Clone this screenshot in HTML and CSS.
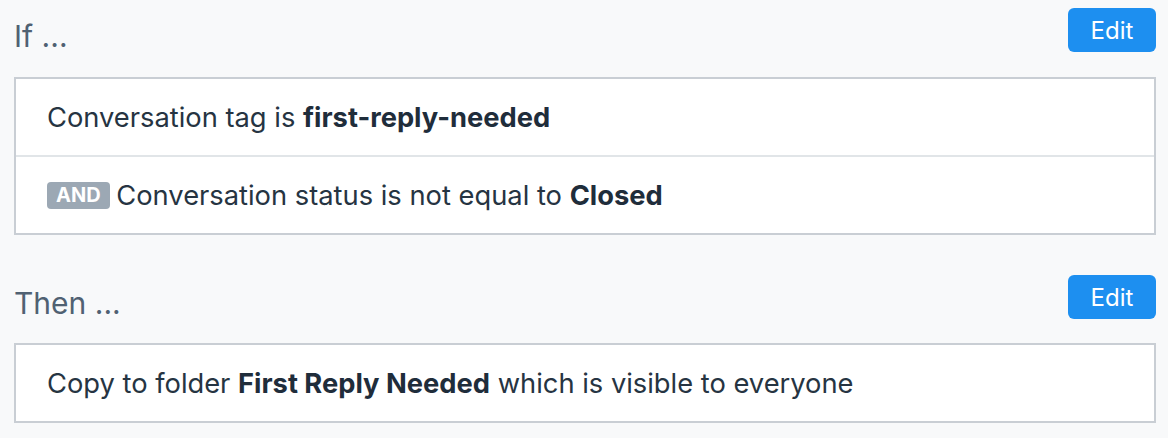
FILE: index.html
```html
<!DOCTYPE html>
<html lang="en">
<head>
    <meta charset="UTF-8">
    <meta name="viewport" content="width=device-width, initial-scale=1.0">
    <title>Workflow Rule</title>
    <link rel="stylesheet" href="styles.css">
</head>
<body>

    <div class="rule">
        <div class="section-head">
            <h2 class="section-title">If ...</h2>
            <button class="edit-btn">Edit</button>
        </div>
        <div class="panel">
            <div class="panel-row">Conversation tag is <strong>first-reply-needed</strong></div>
            <div class="panel-row"><span class="badge">AND</span> Conversation status is not equal to <strong>Closed</strong></div>
        </div>

        <div class="section-head section-head-then">
            <h2 class="section-title">Then ...</h2>
            <button class="edit-btn">Edit</button>
        </div>
        <div class="panel">
            <div class="panel-row">Copy to folder <strong>First Reply Needed</strong> which is visible to everyone</div>
        </div>
    </div>

</body>
</html>
```

FILE: styles.css
```css
body {
    font-family: Inter, "Noto Sans", sans-serif;
    background: #f8f9fa;
    color: #263442;
    margin: 0;
}

.rule {
    padding: 8px 12px 0 14px;
}

.section-head {
    display: flex;
    justify-content: space-between;
    align-items: center;
    height: 44px;
    margin-bottom: 25px;
}

.section-head-then {
    margin-top: 40px;
    margin-bottom: 24px;
}

.section-title {
    margin: 0;
    font-size: 30px;
    font-weight: 400;
    color: #506172;
    padding-top: 12px;
}

.edit-btn {
    width: 88px;
    height: 44px;
    border: none;
    border-radius: 6px;
    background: #1d8ff0;
    color: #fff;
    font-family: inherit;
    font-size: 24px;
}

.panel {
    background: #fff;
    border: 2px solid #c9ced4;
}

.panel-row {
    display: flex;
    align-items: center;
    height: 76px;
    padding-left: 31px;
    font-size: 27.3px;
    white-space: pre;
}

.panel-row + .panel-row {
    border-top: 2px solid #e1e5e8;
}

/* AND connector */
.badge {
    display: inline-block;
    background: #9ca8b4;
    color: #fff;
    font-size: 20px;
    font-weight: 700;
    line-height: 27px;
    padding: 0 9px;
    border-radius: 4px;
    margin-right: -1px;
}

strong {
    font-weight: 700;
    color: #1f2d3b;
}
```
